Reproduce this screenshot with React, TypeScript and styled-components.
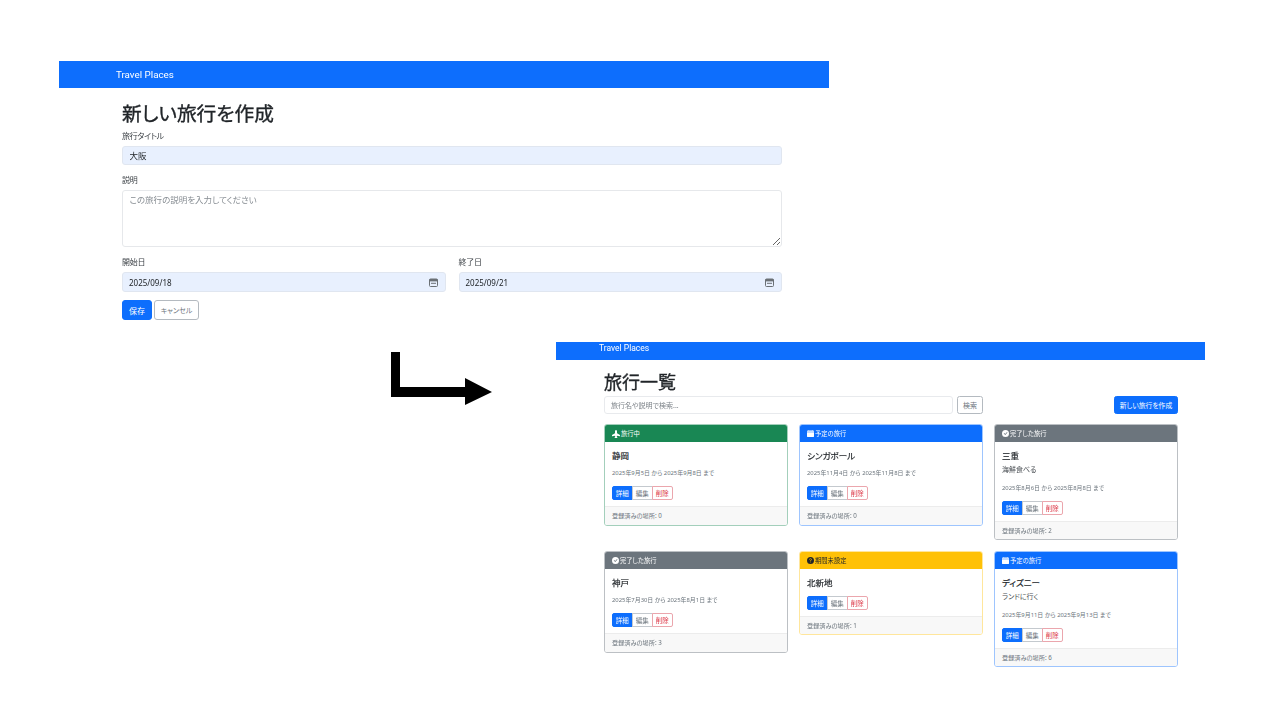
import React from 'react';
import styled, {createGlobalStyle} from 'styled-components';
import {
	BsAirplaneFill,
	BsCalendarFill,
	BsCheckCircleFill,
	BsQuestionCircleFill,
} from 'react-icons/bs';

const GlobalStyle = createGlobalStyle`
	html, body {
		margin: 0;
		background: #fff;
	}
	* {
		box-sizing: border-box;
	}
	body {
		font-family: "Noto Sans", "Noto Sans CJK JP", sans-serif;
		font-feature-settings: "palt";
		color: #212529;
	}
`;

const Slide = styled.div`
	position: relative;
	width: 1280px;
	height: 720px;
	overflow: hidden;
	background: #fff;
`;

// the two screenshots sit freely on the slide
const Shot = styled.div<{$left: number; $top: number; $width: number}>`
	position: absolute;
	left: ${(p) => p.$left}px;
	top: ${(p) => p.$top}px;
	width: ${(p) => p.$width}px;
	filter: blur(0.4px);
`;

const Arrow = styled.svg`
	position: absolute;
	left: 391px;
	top: 352px;
`;

const NavBar = styled.div<{$height: number; $indent: number; $size: number; $raise: number}>`
	height: ${(p) => p.$height}px;
	padding: 0 0 ${(p) => p.$raise}px ${(p) => p.$indent}px;
	display: flex;
	align-items: center;
	background: #0d6efd;
	color: #fff;
	font-family: Roboto, "Noto Sans", sans-serif;
	font-size: ${(p) => p.$size}px;
`;

// Form page
const FormBody = styled.div`
	padding: 14px 47px 0 63px;
`;
const FormTitle = styled.h1`
	margin: 0 0 4px;
	font-size: 19.7px;
	line-height: 24px;
	font-weight: 400;
	-webkit-text-stroke: 0.35px #212529;
`;
const Field = styled.div`
	display: flex;
	flex-direction: column;
`;
const Label = styled.label`
	height: 11px;
	margin-bottom: 5px;
	font-size: 8px;
	letter-spacing: -0.3px;
	line-height: 11px;
	color: #3c4146;
`;
const TextInput = styled.input`
	width: 100%;
	height: 19px;
	margin-bottom: 9px;
	padding: 0 6.5px 1px;
	border: 1px solid #e0e6f0;
	border-radius: 3px;
	background: #e8f0fe;
	color: #212529;
	font: inherit;
	font-size: 8.5px;
	outline: none;
`;
const TextArea = styled.textarea`
	width: 100%;
	height: 57px;
	margin-bottom: 9px;
	padding: 3px 6.5px;
	border: 1px solid #e6e8eb;
	border-radius: 3px;
	background: #fff;
	font: inherit;
	font-size: 8.5px;
	line-height: 12px;
	display: block;
	outline: none;
	&::placeholder {
		color: #868c92;
	}
`;
const DateRow = styled.div`
	display: grid;
	grid-template-columns: 323.5px 323.5px;
	gap: 13px;
`;
const DateBox = styled.div`
	height: 20px;
	padding: 0 7px 0 6px;
	display: flex;
	align-items: center;
	justify-content: space-between;
	border: 1px solid #e0e6f0;
	border-radius: 3px;
	background: #e8f0fe;
	font-size: 8px;
`;
const FormActions = styled.div`
	display: flex;
	gap: 2px;
	margin-top: 8px;
`;
const FormButton = styled.button<{$primary?: boolean}>`
	height: 20px;
	padding: 0;
	width: ${(p) => (p.$primary ? 30 : 45)}px;
	border: 1px solid ${(p) => (p.$primary ? '#0d6efd' : '#b4bac0')};
	border-radius: 3px;
	background: ${(p) => (p.$primary ? '#0d6efd' : '#fff')};
	color: ${(p) => (p.$primary ? '#fff' : '#6c757d')};
	font: inherit;
	font-size: ${(p) => (p.$primary ? 8 : 7)}px;
`;

// List page
const ListBody = styled.div`
	padding: 10.5px 27px 0 48px;
`;
const ListTitle = styled.h1`
	margin: 0 0 2.5px;
	font-size: 18px;
	line-height: 23px;
	font-weight: 400;
	-webkit-text-stroke: 0.35px #212529;
`;
const Toolbar = styled.div`
	display: flex;
	justify-content: space-between;
	margin-bottom: 10px;
`;
const SearchGroup = styled.div`
	display: flex;
	gap: 4px;
`;
const SearchInput = styled.input`
	width: 349px;
	height: 18px;
	padding: 0 6px;
	border: 1px solid #e8eaed;
	border-radius: 3px;
	font: inherit;
	font-size: 7px;
	outline: none;
	&::placeholder {
		color: #7d8389;
	}
`;
const ToolButton = styled.button<{$primary?: boolean}>`
	height: 18px;
	padding: 0;
	width: ${(p) => (p.$primary ? 64 : 26)}px;
	border: 1px solid ${(p) => (p.$primary ? '#0d6efd' : '#b4bac0')};
	border-radius: 2.5px;
	background: ${(p) => (p.$primary ? '#0d6efd' : '#fff')};
	color: ${(p) => (p.$primary ? '#fff' : '#6c757d')};
	font: inherit;
	font-size: ${(p) => (p.$primary ? 6.8 : 7)}px;
`;
const CardGrid = styled.div`
	display: grid;
	grid-template-columns: repeat(3, 184px);
	gap: 11px;
	align-items: start;
`;

type Tone = 'success' | 'primary' | 'secondary' | 'warning';
const toneColor: Record<Tone, string> = {
	success: '#198754',
	primary: '#0d6efd',
	secondary: '#6c757d',
	warning: '#ffc107',
};
const toneBorder: Record<Tone, string> = {
	success: '#a3cfbb',
	primary: '#9ec5fe',
	secondary: '#bcc0c4',
	warning: '#ffe69c',
};

const Card = styled.div<{$tone: Tone}>`
	border: 1px solid ${(p) => toneBorder[p.$tone]};
	border-radius: 3px;
	overflow: hidden;
	background: #fff;
`;
const CardHeader = styled.div<{$tone: Tone}>`
	height: 17px;
	padding: 0 7px;
	display: flex;
	align-items: center;
	gap: 1px;
	background: ${(p) => toneColor[p.$tone]};
	color: ${(p) => (p.$tone === 'warning' ? '#212529' : '#fff')};
	font-size: 6.3px;
`;
const CardBody = styled.div`
	padding: 8.5px 7px 6px;
`;
const CardTitle = styled.h5`
	margin: 0;
	font-size: 8.5px;
	line-height: 10px;
	font-weight: 400;
	-webkit-text-stroke: 0.2px #212529;
	color: #212529;
`;
const CardText = styled.p`
	margin: 4.5px 0 0;
	font-size: 7px;
	line-height: 10px;
	color: #4a4f54;
`;
const CardDates = styled.p`
	margin: 8.5px 0 0;
	font-size: 5.9px;
	line-height: 9px;
	color: #6c757d;
`;
const ButtonGroup = styled.div`
	display: flex;
	margin-top: 8px;
`;
const GroupButton = styled.button<{$kind: 'detail' | 'edit' | 'remove'}>`
	width: 20.5px;
	height: 14px;
	padding: 0;
	font: inherit;
	font-size: 6.5px;
	background: ${(p) => (p.$kind === 'detail' ? '#0d6efd' : '#fff')};
	color: ${(p) => (p.$kind === 'detail' ? '#fff' : p.$kind === 'edit' ? '#6c757d' : '#dc3545')};
	border: 1px solid
		${(p) => (p.$kind === 'detail' ? '#0d6efd' : p.$kind === 'edit' ? '#c4c9ce' : '#eba6ad')};
	border-radius: ${(p) =>
		p.$kind === 'detail' ? '2px 0 0 2px' : p.$kind === 'remove' ? '0 2px 2px 0' : '0'};
	& + & {
		margin-left: -0.5px;
	}
`;
const CardFooter = styled.div`
	height: 18.5px;
	padding: 0 7px;
	display: flex;
	align-items: center;
	border-top: 1px solid #ececec;
	background: #f8f8f8;
	color: #6c757d;
	font-size: 6.2px;
`;

const statusIcon = {
	active: <BsAirplaneFill size={8} />,
	planned: <BsCalendarFill size={7} />,
	done: <BsCheckCircleFill size={7} />,
	unset: <BsQuestionCircleFill size={7} />,
};

const trips = [
	{title: '静岡', tone: 'success', icon: 'active', status: '旅行中', dates: '2025年9月5日 から 2025年9月8日 まで', count: 0},
	{title: 'シンガポール', tone: 'primary', icon: 'planned', status: '予定の旅行', dates: '2025年11月4日 から 2025年11月8日 まで', count: 0},
	{title: '三重', text: '海鮮食べる', tone: 'secondary', icon: 'done', status: '完了した旅行', dates: '2025年8月6日 から 2025年8月8日 まで', count: 2},
	{title: '神戸', tone: 'secondary', icon: 'done', status: '完了した旅行', dates: '2025年7月30日 から 2025年8月1日 まで', count: 3},
	{title: '北新地', tone: 'warning', icon: 'unset', status: '期間未設定', count: 1},
	{title: 'ディズニー', text: 'ランドに行く', tone: 'primary', icon: 'planned', status: '予定の旅行', dates: '2025年9月11日 から 2025年9月13日 まで', count: 6},
] as {title: string; text?: string; tone: Tone; icon: keyof typeof statusIcon; status: string; dates?: string; count: number}[];

function CalendarGlyph() {
	return (
		<svg width="9" height="9" viewBox="0 0 9 9" fill="none">
			<rect x="0.5" y="1" width="8" height="7.5" rx="1" stroke="#6b7075" />
			<rect x="0.5" y="1" width="8" height="2.4" fill="#6b7075" />
			<rect x="2" y="4.8" width="5" height="1" fill="#6b7075" />
		</svg>
	);
}

function App() {
	return (
		<Slide>
			<GlobalStyle />
			<Shot $left={59} $top={61} $width={770}>
				<NavBar $height={27} $indent={57} $size={9.8} $raise={1}>Travel Places</NavBar>
				<FormBody>
					<FormTitle>新しい旅行を作成</FormTitle>
					<Field>
						<Label>旅行タイトル</Label>
						<TextInput readOnly value="大阪" />
					</Field>
					<Field>
						<Label>説明</Label>
						<TextArea readOnly placeholder="この旅行の説明を入力してください" />
					</Field>
					<DateRow>
						<Field>
							<Label>開始日</Label>
							<DateBox>2025/09/18<CalendarGlyph /></DateBox>
						</Field>
						<Field>
							<Label>終了日</Label>
							<DateBox>2025/09/21<CalendarGlyph /></DateBox>
						</Field>
					</DateRow>
					<FormActions>
						<FormButton $primary>保存</FormButton>
						<FormButton>キャンセル</FormButton>
					</FormActions>
				</FormBody>
			</Shot>

			<Arrow width="101" height="54" viewBox="0 0 101 54">
				<path d="M0 0H9V35H74V26L101 40L74 53V45H0Z" fill="#000" />
			</Arrow>

			<Shot $left={556} $top={342} $width={649}>
				<NavBar $height={18} $indent={43} $size={8.5} $raise={6}>Travel Places</NavBar>
				<ListBody>
					<ListTitle>旅行一覧</ListTitle>
					<Toolbar>
						<SearchGroup>
							<SearchInput readOnly placeholder="旅行名や説明で検索..." />
							<ToolButton>検索</ToolButton>
						</SearchGroup>
						<ToolButton $primary>新しい旅行を作成</ToolButton>
					</Toolbar>
					<CardGrid>
						{trips.map((trip) => (
							<Card key={trip.title} $tone={trip.tone}>
								<CardHeader $tone={trip.tone}>
									{statusIcon[trip.icon]}
									{trip.status}
								</CardHeader>
								<CardBody>
									<CardTitle>{trip.title}</CardTitle>
									{trip.text && <CardText>{trip.text}</CardText>}
									{trip.dates && <CardDates>{trip.dates}</CardDates>}
									<ButtonGroup>
										<GroupButton $kind="detail">詳細</GroupButton>
										<GroupButton $kind="edit">編集</GroupButton>
										<GroupButton $kind="remove">削除</GroupButton>
									</ButtonGroup>
								</CardBody>
								<CardFooter>登録済みの場所: {trip.count}</CardFooter>
							</Card>
						))}
					</CardGrid>
				</ListBody>
			</Shot>
		</Slide>
	);
}

export default App;
